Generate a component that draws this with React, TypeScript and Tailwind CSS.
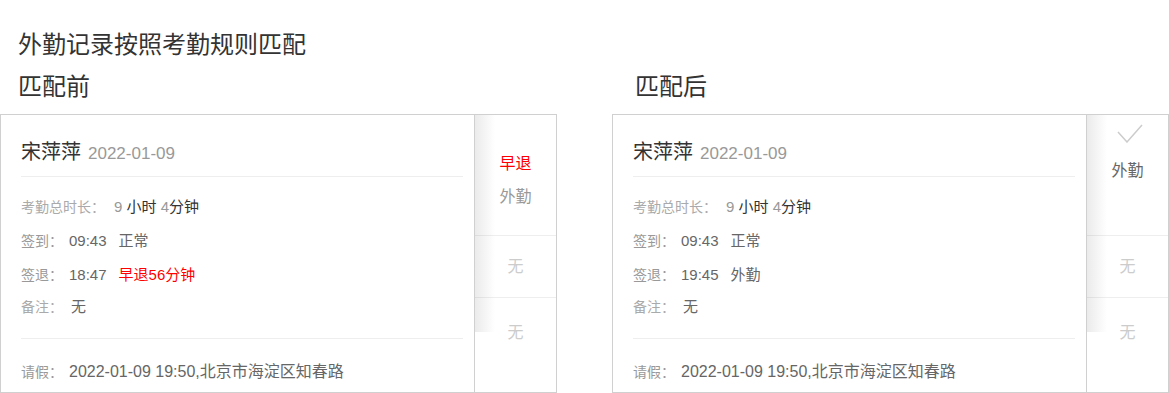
import React from "react";

type Data = {
  title: string;
  titlePl: string;
  outTime: string;
  outStatus: React.ReactNode;
  side1: React.ReactNode;
};

function Row({
  label,
  labelColor,
  children,
  h,
}: {
  label: string;
  labelColor: string;
  children: React.ReactNode;
  h: string;
}) {
  return (
    <div className={`flex items-center whitespace-nowrap ${h}`}>
      <span className={`text-[14px] leading-[20px] ${labelColor}`}>{label}</span>
      {children}
    </div>
  );
}

function Panel({ d }: { d: Data }) {
  return (
    <div className="w-[557px] shrink-0">
      <div className={`h-[32px] text-[24px] leading-[32px] text-[#333] ${d.titlePl}`}>{d.title}</div>
      <div className="mt-[11px] flex h-[279px] border border-[#d0d0d0] bg-white">
        <div className="w-[474px] shrink-0 border-r border-[#d0d0d0] pl-[20px] pr-[11px]">
          <div className="border-b border-[#eee] pt-[23px] pb-[10px]">
            <div className="flex h-[28px] items-baseline whitespace-nowrap leading-[28px]">
              <span className="text-[20px] text-[#333]">宋萍萍</span>
              <span className="ml-[7px] text-[17px] text-[#999]">2022-01-09</span>
            </div>
          </div>
          <div className="border-b border-[#eee] pt-[13px] pb-[16px]">
            <Row label="考勤总时长：" labelColor="text-[#aaa]" h="h-[34px]">
              <span className="ml-[9px] text-[15px] leading-[20px]">
                <span className="text-[#999]">9 </span>
                <span className="text-[#333]">小时</span>
                <span className="text-[#999]"> 4</span>
                <span className="text-[#333]">分钟</span>
              </span>
            </Row>
            <Row label="签到：" labelColor="text-[#999]" h="h-[34px]">
              <span className="ml-[6px] text-[15px] leading-[20px] text-[#666]">09:43</span>
              <span className="ml-[12px] text-[15px] leading-[20px] text-[#666]">正常</span>
            </Row>
            <Row label="签退：" labelColor="text-[#999]" h="h-[34px]">
              <span className="ml-[6px] text-[15px] leading-[20px] text-[#666]">{d.outTime}</span>
              <span className="ml-[12px] text-[15px] leading-[20px]">{d.outStatus}</span>
            </Row>
            <Row label="备注：" labelColor="text-[#aaa]" h="h-[30px]">
              <span className="ml-[8px] text-[15px] leading-[20px] text-[#666]">无</span>
            </Row>
          </div>
          <div className="pt-[23px]">
            <div className="flex h-[20px] items-center whitespace-nowrap">
              <span className="text-[14px] leading-[20px] text-[#999]">请假：</span>
              <span className="ml-[6px] text-[16px] leading-[20px] text-[#666]">
                2022-01-09 19:50,北京市海淀区知春路
              </span>
            </div>
          </div>
        </div>
        <div className="relative flex min-w-0 flex-1 flex-col">
          <div className="pointer-events-none absolute left-0 top-0 h-[217px] w-[20px] bg-gradient-to-r from-black/[0.08] to-transparent" />
          <div className="h-[121px] border-b border-[#eee]">{d.side1}</div>
          <div className="flex h-[62px] items-center justify-center border-b border-[#eee] text-[16px] text-[#ccc]">
            无
          </div>
          <div className="pt-[23px] text-center text-[16px] leading-[24px] text-[#ccc]">无</div>
        </div>
      </div>
    </div>
  );
}

export default function App() {
  const left: Data = {
    title: "匹配前",
    titlePl: "pl-[18px]",
    outTime: "18:47",
    outStatus: <span className="text-[#f00]">早退56分钟</span>,
    side1: (
      <div className="pt-[32px] text-center text-[16px] leading-[33px]">
        <div className="text-[#f00]">早退</div>
        <div className="text-[#999]">外勤</div>
      </div>
    ),
  };
  const right: Data = {
    title: "匹配后",
    titlePl: "pl-[23px]",
    outTime: "19:45",
    outStatus: <span className="text-[#666]">外勤</span>,
    side1: (
      <div className="pt-[9px]">
        <div className="pl-[30px]">
          <svg width="26" height="19" viewBox="0 0 26 19" fill="none">
            <polyline points="1,8 10,18 25,1" stroke="#cccccc" strokeWidth="1.5" fill="none" />
          </svg>
        </div>
        <div className="mt-[16px] text-center text-[16px] leading-[24px] text-[#666]">外勤</div>
      </div>
    ),
  };
  return (
    <div className="h-[393px] w-[1169px] overflow-hidden bg-white pt-[29px] font-['Liberation_Sans','Noto_Sans_CJK_SC',sans-serif]">
      <div className="h-[32px] pl-[18px] text-[24px] leading-[32px] text-[#333]">外勤记录按照考勤规则匹配</div>
      <div className="mt-[10px] flex gap-[55px]">
        <Panel d={left} />
        <Panel d={right} />
      </div>
    </div>
  );
}
